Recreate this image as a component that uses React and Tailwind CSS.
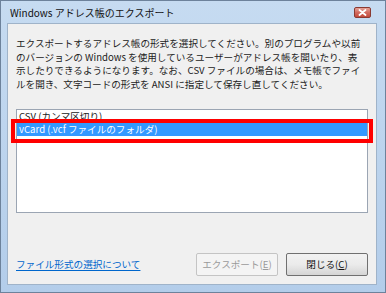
export default function App() {
  const font = { fontFamily: '"Noto Sans CJK JP", "Noto Sans", sans-serif' };

  return (
    <div
      className="w-[386px] h-[293px] flex flex-col bg-gradient-to-b from-[#c6dbf1] to-[#b3cdea] border border-[#6d829b] pl-[6px] pr-[8px] pb-[7px] text-black"
      style={font}
    >
      {/* title bar */}
      <div className="h-[22px] flex items-center justify-between">
        <span className="pl-[3px] pt-[1px] text-[10px] leading-none text-[#111]">
          Windows アドレス帳のエクスポート
        </span>
        <div className="mr-[6px] mt-[1px] w-[17px] h-[11px] rounded-[2px] border border-[#8a3a32] bg-gradient-to-b from-[#e4a197] via-[#d26a5e] to-[#c24a3c] flex items-center justify-center">
          <svg width="9" height="7" viewBox="0 0 9 7">
            <path d="M1.5 1 L7.5 6 M7.5 1 L1.5 6" stroke="#fff" strokeWidth="1.8" strokeLinecap="round" />
          </svg>
        </div>
      </div>

      {/* client area */}
      <div className="flex-1 flex flex-col border border-[#9fb3c9] bg-[#f0f0f0] px-[8px]">
        <p className="mt-[13px] text-[9.6px] leading-[13.7px] text-[#222] whitespace-nowrap">
          エクスポートするアドレス帳の形式を選択してください。別のプログラムや以前
          <br />
          のバージョンの Windows を使用しているユーザーがアドレス帳を開いたり、表
          <br />
          示したりできるようになります。なお、CSV ファイルの場合は、メモ帳でファイ
          <br />
          ルを開き、文字コードの形式を ANSI に指定して保存し直してください。
        </p>

        {/* list box */}
        <div className="relative mt-[17px] h-[104px] border border-[#9ba5b3] bg-white">
          <div className="h-[13px] pl-[2px] text-[9.6px] leading-[13px] text-[#222] whitespace-nowrap">
            CSV (カンマ区切り)
          </div>
          <div className="h-[13px] pl-[2px] bg-[#3399ff] text-[9.6px] leading-[13px] text-white whitespace-nowrap">
            vCard (.vcf ファイルのフォルダ)
          </div>
          <div className="absolute left-[-6px] top-[9px] w-[362px] h-[24px] border-4 border-[#ff0000]" />
        </div>

        {/* footer */}
        <div className="mt-auto mb-[8px] flex items-center">
          <span className="text-[9.6px] leading-none text-[#0066cc] underline underline-offset-2">
            ファイル形式の選択について
          </span>
          <div className="ml-auto flex gap-[8px]">
            <div className="w-[82px] h-[23px] flex items-center justify-center rounded-[2px] border border-[#c4c4c4] bg-[#f4f4f4] text-[9.6px] text-[#9a9a9a]">
              エクスポート(<span className="underline">E</span>)
            </div>
            <div className="w-[82px] h-[23px] flex items-center justify-center rounded-[2px] border border-[#707070] bg-gradient-to-b from-[#f2f2f2] via-[#ebebeb] to-[#d5d5d5] text-[9.6px] text-[#111]">
              閉じる(<span className="underline">C</span>)
            </div>
          </div>
        </div>
      </div>
    </div>
  );
}
